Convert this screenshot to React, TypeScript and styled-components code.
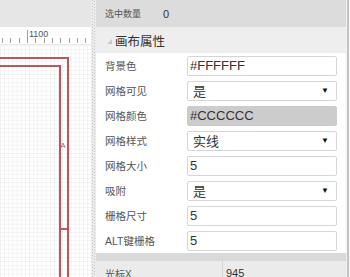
import React from "react";
import styled, { createGlobalStyle } from "styled-components";

const GlobalStyle = createGlobalStyle`
  html, body { margin: 0; padding: 0; }
  body {
    width: 350px;
    height: 277px;
    overflow: hidden;
    background: #fff;
    font-family: "Liberation Sans", Arial, "Noto Sans CJK SC", sans-serif;
  }
  * { box-sizing: border-box; }
`;

const Root = styled.div`
  display: flex;
  width: 350px;
  height: 277px;
  overflow: hidden;
`;

const CanvasPane = styled.div`
  width: 91px;
  display: flex;
  flex-direction: column;
  overflow: hidden;
`;

const CanvasTopBar = styled.div`
  height: 27px;
  background: #e6e6e6;
`;

const Ruler = styled.div`
  position: relative;
  height: 18px;
  background: #fff;
  border-bottom: 1px solid #ececec;
`;

const RulerLabel = styled.span`
  position: absolute;
  left: 29px;
  top: 2px;
  font-size: 9px;
  line-height: 10px;
  color: #555;
`;

const GridArea = styled.div`
  position: relative;
  flex: 1;
  overflow: hidden;
  background-color: #fff;
  background-image: linear-gradient(to right, #f1f1f1 1px, transparent 1px),
    linear-gradient(to bottom, #f1f1f1 1px, transparent 1px);
  background-size: 4.1667px 4.1667px;
`;

const Pool = styled.div`
  position: absolute;
  left: -10px;
  top: 12px;
  width: 79px;
  bottom: -10px;
  border: 2px solid #b9585a;
`;

const LaneBody = styled.div`
  position: absolute;
  left: -10px;
  top: 20px;
  width: 71px;
  bottom: -10px;
  border: 2px solid #b9585a;
`;

const LaneHeader = styled.div`
  position: absolute;
  left: 59px;
  top: 13px;
  width: 8px;
  height: 172px;
  padding-top: 4px;
  border-bottom: 2px solid #b9585a;
  display: flex;
  align-items: center;
  justify-content: center;
  font-size: 8px;
  color: #b9585a;
`;

const Splitter = styled.div`
  width: 5px;
  background:
    linear-gradient(#c4c4c4 50%, transparent 50%) 1px 0 / 1px 3px repeat-y,
    linear-gradient(#c4c4c4 50%, transparent 50%) 3px 1px / 1px 3px repeat-y,
    #ececec;
`;

const Panel = styled.div`
  width: 250px;
  display: flex;
  flex-direction: column;
  background: #fff;
`;

const ScrollEdge = styled.div`
  width: 4px;
  border-left: 1px solid #f2f2f2;
  border-right: 1px solid #f6f6f6;
  background: #c4c4c4;
`;

const SummaryRow = styled.div`
  height: 27px;
  flex: none;
  display: flex;
  align-items: center;
  padding-left: 9px;
  background: #dcdcdc;
`;

const SummaryLabel = styled.span`
  width: 58px;
  font-size: 9px;
  color: #555;
`;

const SummaryValue = styled.span`
  font-size: 11px;
  color: #333;
`;

const SectionHeader = styled.div`
  height: 26px;
  flex: none;
  display: flex;
  align-items: center;
  gap: 3px;
  padding-left: 11px;
  background: #eeeeee;
`;

const Triangle = styled.span`
  width: 0;
  height: 0;
  margin-top: 2px;
  border-style: solid;
  border-width: 0 0 5px 5px;
  border-color: transparent transparent #c8c8c8 transparent;
`;

const SectionTitle = styled.span`
  font-size: 12.5px;
  color: #333;
`;

const PropRow = styled.div`
  height: 25px;
  flex: none;
  display: flex;
  align-items: center;
  padding-left: 9px;
`;

const PropLabel = styled.span`
  width: 82px;
  font-size: 10.5px;
  color: #555;
`;

const Field = styled.div<{ $muted?: boolean; $select?: boolean }>`
  width: 150px;
  height: 20px;
  display: flex;
  align-items: center;
  justify-content: space-between;
  padding: 0 7px 0 ${(p) => (p.$select ? "5px" : "2px")};
  border: 1px solid ${(p) => (p.$muted ? "#cccccc" : "#d6d6d6")};
  border-radius: 2px;
  background: ${(p) => (p.$muted ? "#cccccc" : "#fff")};
  font-size: 13px;
  color: #333;
`;

const Caret = styled.span`
  font-size: 8px;
  color: #111;
`;

const Band = styled.div`
  height: 8px;
  flex: none;
  background: #d9d9d9;
`;

const InfoRow = styled.div`
  height: 24px;
  flex: none;
  display: flex;
  background: #ebebeb;
`;

const InfoLabel = styled.div`
  width: 127px;
  display: flex;
  align-items: center;
  padding-left: 9px;
  border-right: 1px solid #d6d6d6;
  font-size: 10px;
  color: #555;
`;

const InfoValue = styled.div`
  display: flex;
  align-items: center;
  padding-left: 3px;
  font-size: 11px;
  color: #333;
`;

type Prop = { label: string; value: string; select?: boolean; muted?: boolean };

const props: Prop[] = [
  { label: "背景色", value: "#FFFFFF" },
  { label: "网格可见", value: "是", select: true },
  { label: "网格颜色", value: "#CCCCCC", muted: true },
  { label: "网格样式", value: "实线", select: true },
  { label: "网格大小", value: "5" },
  { label: "吸附", value: "是", select: true },
  { label: "栅格尺寸", value: "5" },
  { label: "ALT键栅格", value: "5" },
];

const RulerTicks = () => {
  const ticks = [];
  for (let k = 0; k < 11; k++) {
    const x = Math.round(2 + k * 8.333) + 0.5;
    const big = k === 3;
    ticks.push(
      <line key={k} x1={x} x2={x} y1={big ? 3 : 11} y2={16} stroke="#a0a0a0" strokeWidth={1} />
    );
  }
  return (
    <svg width="91" height="17" style={{ position: "absolute", left: 0, top: 0 }}>
      {ticks}
    </svg>
  );
};

export default function App() {
  return (
    <>
      <GlobalStyle />
      <Root>
        <CanvasPane>
          <CanvasTopBar />
          <Ruler>
            <RulerTicks />
            <RulerLabel>1100</RulerLabel>
          </Ruler>
          <GridArea>
            <Pool />
            <LaneBody />
            <LaneHeader>A</LaneHeader>
          </GridArea>
        </CanvasPane>
        <Splitter />
        <Panel>
          <SummaryRow>
            <SummaryLabel>选中数量</SummaryLabel>
            <SummaryValue>0</SummaryValue>
          </SummaryRow>
          <SectionHeader>
            <Triangle />
            <SectionTitle>画布属性</SectionTitle>
          </SectionHeader>
          {props.map((p) => (
            <PropRow key={p.label}>
              <PropLabel>{p.label}</PropLabel>
              <Field $muted={p.muted} $select={p.select}>
                <span>{p.value}</span>
                {p.select && <Caret>▼</Caret>}
              </Field>
            </PropRow>
          ))}
          <Band />
          <InfoRow>
            <InfoLabel>光标X</InfoLabel>
            <InfoValue>945</InfoValue>
          </InfoRow>
        </Panel>
        <ScrollEdge />
      </Root>
    </>
  );
}
